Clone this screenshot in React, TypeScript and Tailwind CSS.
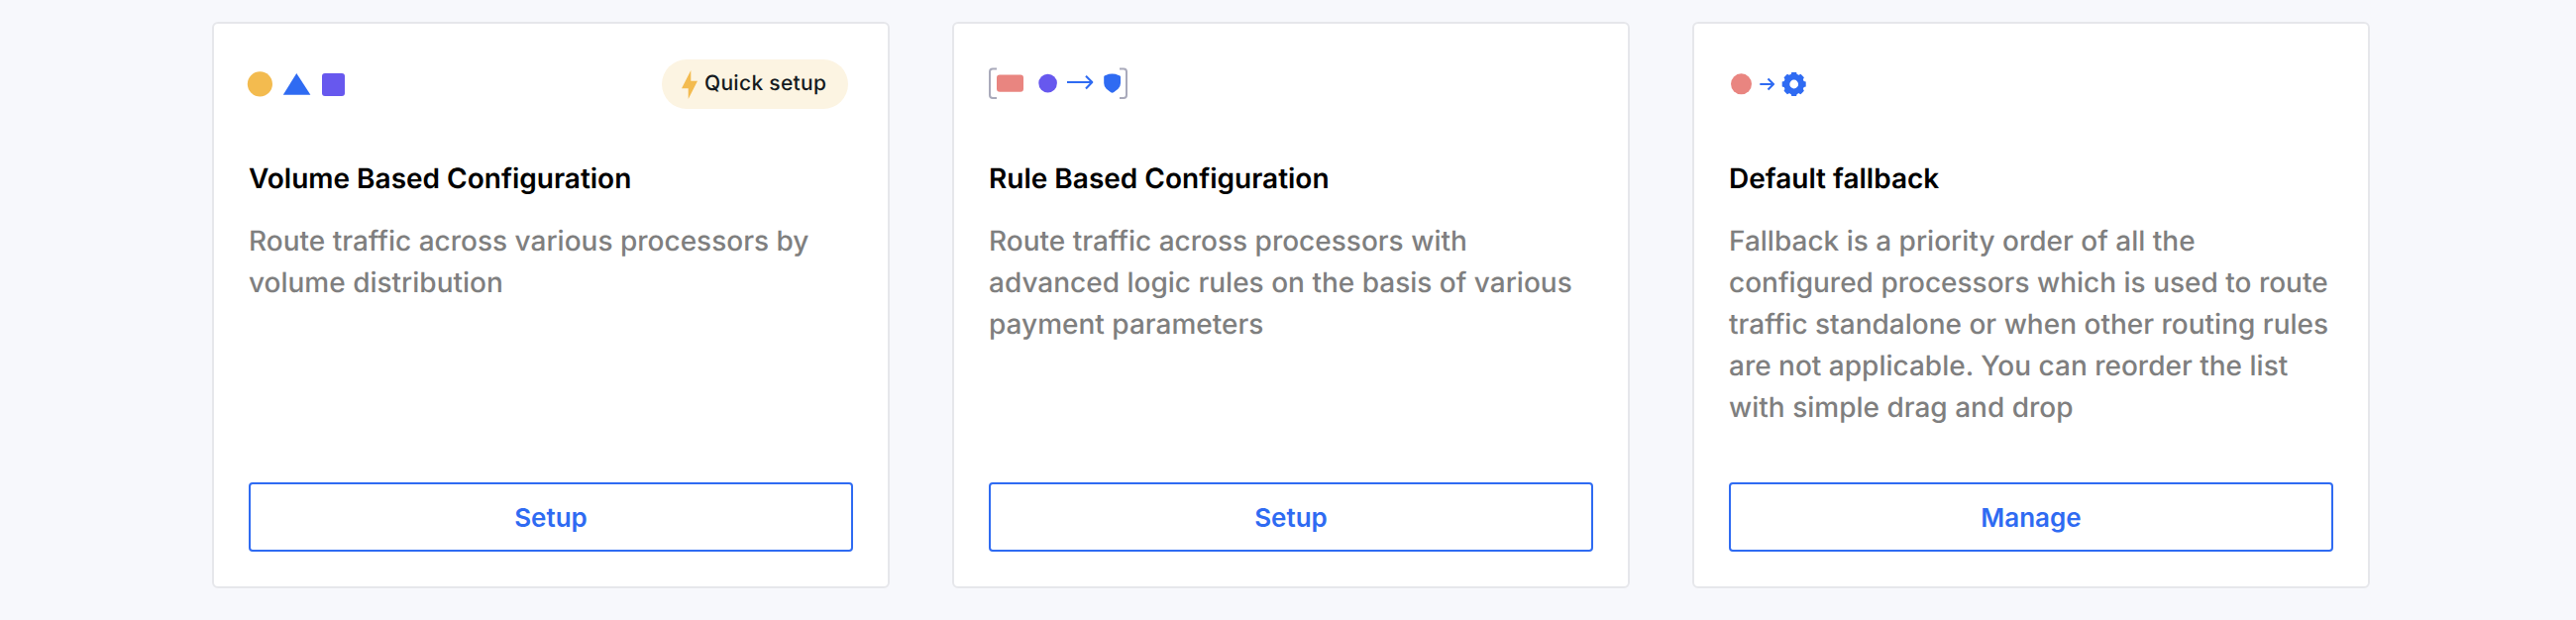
import React from "react";

type CardProps = { title: string; lines: string[]; action: string; icon: React.ReactNode; quick?: boolean };

const VolumeIcon = () => (
  <svg className="overflow-visible" width="100" height="50" viewBox="0 0 100 50">
    <circle cx="11.4" cy="24.8" r="12.6" fill="#f3bb4f" />
    <path d="M48.3 14L62.4 35.8H34.8Z" fill="#2f6bf2" />
    <rect x="74" y="14" width="23" height="23" rx="3" fill="#6758ee" />
  </svg>
);

const RuleIcon = () => (
  <svg className="overflow-visible" width="140" height="50" viewBox="0 0 140 50">
    <path d="M8 9.5H4Q1 9.5 1 12.5V36Q1 39 4 39H8M132 9.5H136Q139 9.5 139 12.5V36Q139 39 136 39H132" fill="none" stroke="#a9aabb" strokeWidth="2" />
    <rect x="8" y="15.4" width="27" height="17.4" rx="3" fill="#e98580" />
    <circle cx="59.6" cy="24.1" r="9.3" fill="#6758ee" />
    <path d="M79 23H104.5M98 16.7L104.3 23L98 29.500" fill="none" stroke="#2f6bf2" strokeWidth="2.1" strokeLinejoin="round" />
    <path d="M116.2 17.5Q116.400 16.300 118 15.900Q124.500 13 131 15.900Q132.800 16.300 133 17.500V24Q133 27.500 130.500 29.700L126 33.300Q124.600 34.200 123.200 33.300L118.700 29.700Q116.200 27.500 116.200 24Z" fill="#2f6bf2" />
  </svg>
);

const teeth = [0, 45, 90, 135, 180, 225, 270, 315];

const FallbackIcon = () => (
  <svg className="overflow-visible" width="100" height="50" viewBox="0 0 100 50">
    <circle cx="12.5" cy="24.8" r="10.5" fill="#e98580" />
    <path d="M31.3 25H45M39.500 19.500L45 25L39.500 30.500" fill="none" stroke="#2f6bf2" strokeWidth="2.1" strokeLinejoin="round" />
    <g transform="translate(65.7 25)">
      <circle r="7.400" fill="none" stroke="#2f6bf2" strokeWidth="6" />
      {teeth.map((a) => <path key={a} d="M-3.300 -9L-2.400 -12H2.400L3.300 -9Z" fill="#2f6bf2" transform={`rotate(${a})`} />)}
    </g>
  </svg>
);

function Card({ title, lines, action, icon, quick }: CardProps) {
  return (
    <section className="flex h-[572px] w-[684px] flex-col rounded-[6px] border-2 border-[#e6e7eb] bg-white pr-[35px] pb-[35px] pl-[35px]">
      <div className="mt-[36px] flex h-[50px] items-center justify-between pr-[5px]">
        {icon}
        {quick && (
          <div className="flex h-[50px] w-[188px] items-center rounded-full bg-[#fcf4e2] pl-[20px]">
            <svg width="16" height="29" viewBox="0 0 16 29"><path d="M9.300 0L0 18.300H6.700V29L16 10.700H9.300Z" fill="#f3bb4f" /></svg>
            <span className="ml-[7px] text-[21px] font-medium tracking-[0.3px] whitespace-nowrap text-[#151a20]">Quick setup</span>
          </div>
        )}
      </div>
      <h2 className="mt-[49px] text-[28px] leading-[42px] font-semibold text-black">{title}</h2>
      <p className="mt-[21px] text-[28px] leading-[42px] font-medium whitespace-nowrap text-[#7f7f7f]">
        {lines.map((l) => <span key={l} className="block">{l}</span>)}
      </p>
      <button className="mt-auto h-[70px] w-full rounded-[4px] border-2 border-[#2f6bf2] text-[26px] font-semibold text-[#2f6bf2]">{action}</button>
    </section>
  );
}

export default function App() {
  return (
    <main className="flex h-[626px] w-[2600px] gap-[63px] bg-[#f7f8fc] pt-[22px] pl-[214px] font-['Inter',sans-serif] antialiased [text-rendering:geometricPrecision]">
      <Card quick title="Volume Based Configuration" action="Setup" lines={["Route traffic across various processors by", "volume distribution"]} icon={<VolumeIcon />} />
      <Card title="Rule Based Configuration" action="Setup" lines={["Route traffic across processors with", "advanced logic rules on the basis of various", "payment parameters"]} icon={<RuleIcon />} />
      <Card title="Default fallback" action="Manage" lines={["Fallback is a priority order of all the", "configured processors which is used to route", "traffic standalone or when other routing rules", "are not applicable. You can reorder the list", "with simple drag and drop"]} icon={<FallbackIcon />} />
    </main>
  );
}
